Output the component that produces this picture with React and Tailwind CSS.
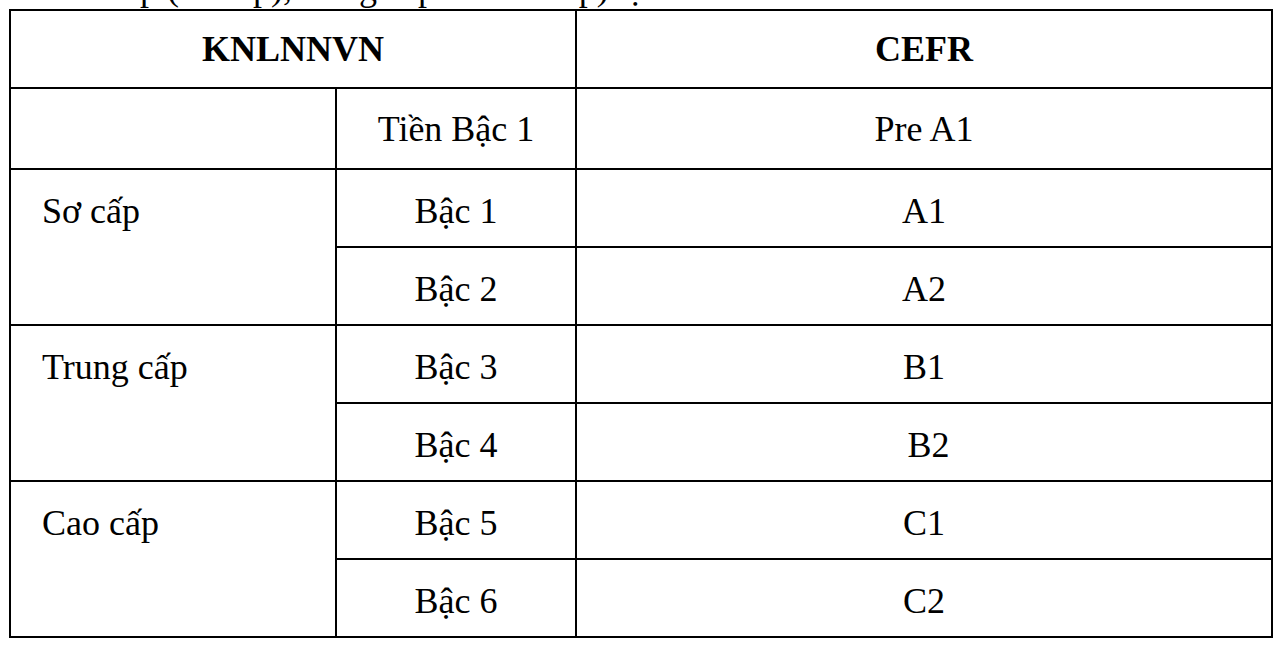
const rows = [
  { group: 'Sơ cấp', items: [['Bậc 1', 'A1'], ['Bậc 2', 'A2']] },
  { group: 'Trung cấp', items: [['Bậc 3', 'B1'], ['Bậc 4', ' B2']] },
  { group: 'Cao cấp', items: [['Bậc 5', 'C1'], ['Bậc 6', 'C2']] },
]

export default function App() {
  return (
    <div className="w-[1288px] h-[656px] bg-white text-black overflow-hidden" style={{ fontFamily: '"Liberation Serif", "Times New Roman", serif' }}>
      {/* tail of the paragraph above the table */}
      <div className="h-[9px] overflow-hidden text-[36px] leading-none pl-[4px]">
        <div className="-mt-[30px] whitespace-nowrap">Chia 3 cấp (sơ cấp), trung cấp và cao cấp) tạo</div>
      </div>

      <table className="ml-[9px] border-collapse text-[36px] leading-[41px]">
        <colgroup>
          <col className="w-[326px]" />
          <col className="w-[240px]" />
          <col className="w-[696px]" />
        </colgroup>
        <tbody>
          <tr className="h-[78px]">
            <th colSpan={2} className="border-2 border-black font-bold text-center align-middle">KNLNNVN</th>
            <th className="border-2 border-black font-bold text-center align-middle">CEFR</th>
          </tr>
          <tr className="h-[81px]">
            <td className="border-2 border-black"></td>
            <td className="border-2 border-black text-center align-middle pt-[2px]">Tiền Bậc 1</td>
            <td className="border-2 border-black text-center align-middle pt-[2px]">Pre A1</td>
          </tr>
          {rows.map((r) =>
            r.items.map(([level, cefr], i) => (
              <tr key={level} className="h-[78px]">
                {i === 0 && (
                  <td rowSpan={2} className="border-2 border-black align-top pl-[31px] pt-[21px]">
                    {r.group}
                  </td>
                )}
                <td className="border-2 border-black text-center align-middle pt-[6px]">{level}</td>
                <td className="border-2 border-black text-center align-middle pt-[6px] whitespace-pre">{cefr}</td>
              </tr>
            ))
          )}
        </tbody>
      </table>
    </div>
  )
}
